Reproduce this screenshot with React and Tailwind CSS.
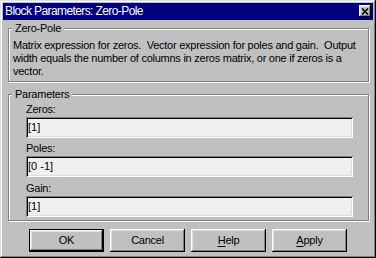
export default function App() {
  const raised =
    "shadow-[inset_-1px_-1px_0_#000,inset_1px_1px_0_#fff,inset_-2px_-2px_0_#808080,inset_2px_2px_0_#dfdfdf]";
  const sunken =
    "shadow-[inset_1px_1px_0_#808080,inset_-1px_-1px_0_#fff,inset_2px_2px_0_#000,inset_-2px_-2px_0_#dfdfdf]";
  const group =
    "relative box-border border border-[#808080] shadow-[inset_1px_1px_0_#fff,1px_1px_0_#fff]";
  const legend =
    "absolute -top-[7px] left-[3px] bg-[#c0c0c0] px-[3px] leading-[13px] tracking-[-0.25px]";

  const Field = ({ label, value, mt }) => (
    <div className={mt}>
      <div className="leading-[13px] tracking-[-0.25px]">{label}</div>
      <div
        className={`mt-[1px] h-[21px] w-[327px] bg-[#f0f0f0] ${sunken} flex items-center pl-[2px] leading-[13px]`}
      >
        {value}
      </div>
    </div>
  );

  const Button = ({ children, isDefault }) => (
    <div
      className={`box-border flex h-[23px] w-[75px] items-center justify-center leading-[13px] tracking-[-0.25px] ${
        isDefault
          ? "border border-black shadow-[inset_-1px_-1px_0_#000,inset_1px_1px_0_#fff,inset_-2px_-2px_0_#808080,inset_2px_2px_0_#dfdfdf]"
          : raised
      }`}
    >
      {children}
    </div>
  );

  return (
    <div
      className={`box-border h-[258px] w-[376px] bg-[#c0c0c0] p-[3px] font-['Liberation_Sans',Arial,sans-serif] text-[11px] text-black shadow-[inset_-1px_-1px_0_#000,inset_1px_1px_0_#dfdfdf,inset_-2px_-2px_0_#808080,inset_2px_2px_0_#fff]`}
    >
      <div className="flex h-[17px] items-start justify-between bg-[#000080] pl-[2px] pr-[2px]">
        <span className="whitespace-nowrap text-[12px] leading-[17px] tracking-[-0.6px] text-white">
          Block Parameters: Zero-Pole
        </span>
        <div
          className={`mt-[2px] flex h-[12px] w-[12px] items-center justify-center bg-[#c0c0c0] ${raised}`}
        >
          <svg width="8" height="7" viewBox="0 0 8 7">
            <path d="M1 0.5 L7 6.5 M7 0.5 L1 6.5" stroke="#000" strokeWidth="1.6" />
          </svg>
        </div>
      </div>

      <div className={`${group} ml-[5px] mt-[8px] h-[54px] w-[361px] pl-[4px] pt-[10px]`}>
        <span className={legend}>Zero-Pole</span>
        <p className="whitespace-pre leading-[13px] tracking-[-0.25px]">
          {"Matrix expression for zeros.  Vector expression for poles and gain.  Output\nwidth equals the number of columns in zeros matrix, or one if zeros is a\nvector."}
        </p>
      </div>

      <div className={`${group} ml-[5px] mt-[12px] h-[127px] w-[361px] pl-[17px] pt-[8px]`}>
        <span className={legend}>Parameters</span>
        <Field label="Zeros:" value="[1]" mt="" />
        <Field label="Poles:" value="[0 -1]" mt="mt-[4px]" />
        <Field label="Gain:" value="[1]" mt="mt-[5px]" />
      </div>

      <div className="ml-[26px] mt-[8px] flex gap-[6px]">
        <Button isDefault>OK</Button>
        <Button>Cancel</Button>
        <Button>
          <span className="underline underline-offset-[2px]">H</span>elp
        </Button>
        <Button>
          <span className="underline underline-offset-[2px]">A</span>pply
        </Button>
      </div>
    </div>
  );
}
